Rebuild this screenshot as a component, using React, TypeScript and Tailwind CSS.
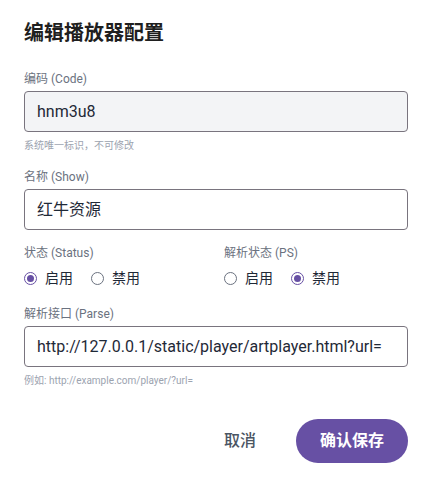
import React from 'react';

const font = { fontFamily: 'Roboto, "Noto Sans CJK SC", sans-serif' };

function Radio({ checked, label }: { checked: boolean; label: string }) {
    return (
        <label className="flex items-center gap-2 cursor-pointer">
            <span
                className={`w-[13px] h-[13px] rounded-full border flex items-center justify-center ${
                    checked ? 'border-[#6750a4]' : 'border-[#6b7280]'
                }`}
            >
                {checked && <span className="w-[7px] h-[7px] rounded-full bg-[#6750a4]" />}
            </span>
            <span className="text-sm text-[#1f2937]">{label}</span>
        </label>
    );
}

function Field({
    label,
    value,
    hint,
    disabled,
}: {
    label: string;
    value: string;
    hint?: string;
    disabled?: boolean;
}) {
    return (
        <div className="flex flex-col">
            <span className="text-xs leading-4 text-[#6b7280]">{label}</span>
            <div
                className={`mt-1 h-[41px] rounded border border-[#79747e] px-3 flex items-center text-base text-[#1f2937] ${
                    disabled ? 'bg-[#f3f4f6]' : 'bg-white'
                }`}
            >
                {value}
            </div>
            {hint && <span className="mt-2 text-[10px] leading-3 text-[#9ca3af]">{hint}</span>}
        </div>
    );
}

export default function App() {
    return (
        <div className="w-[433px] h-[483px] bg-white pl-6 pr-[25px] pt-[19px]" style={font}>
            <h2 className="text-xl leading-7 font-bold text-[#1f1f1f]">编辑播放器配置</h2>

            <div className="mt-6 flex flex-col">
                <Field label="编码 (Code)" value="hnm3u8" hint="系统唯一标识，不可修改" disabled />

                <div className="mt-[17px]">
                    <Field label="名称 (Show)" value="红牛资源" />
                </div>

                {/* Status toggles */}
                <div className="mt-[15px] grid grid-cols-2 gap-4">
                    <div className="flex flex-col">
                        <span className="text-xs leading-4 text-[#6b7280]">状态 (Status)</span>
                        <div className="mt-[7px] flex items-center gap-[18px]">
                            <Radio checked label="启用" />
                            <Radio checked={false} label="禁用" />
                        </div>
                    </div>
                    <div className="flex flex-col">
                        <span className="text-xs leading-4 text-[#6b7280]">解析状态 (PS)</span>
                        <div className="mt-[7px] flex items-center gap-[18px]">
                            <Radio checked={false} label="启用" />
                            <Radio checked label="禁用" />
                        </div>
                    </div>
                </div>

                <div className="mt-[18px]">
                    <Field
                        label="解析接口 (Parse)"
                        value="http://127.0.0.1/static/player/artplayer.html?url="
                        hint="例如: http://example.com/player/?url="
                    />
                </div>
            </div>

            <div className="mt-8 flex items-center justify-end gap-4">
                <button className="h-11 px-6 text-base font-medium text-[#4b5563]">取消</button>
                <button className="h-11 px-6 rounded-full bg-[#6750a4] text-base font-bold text-white">
                    确认保存
                </button>
            </div>
        </div>
    );
}
